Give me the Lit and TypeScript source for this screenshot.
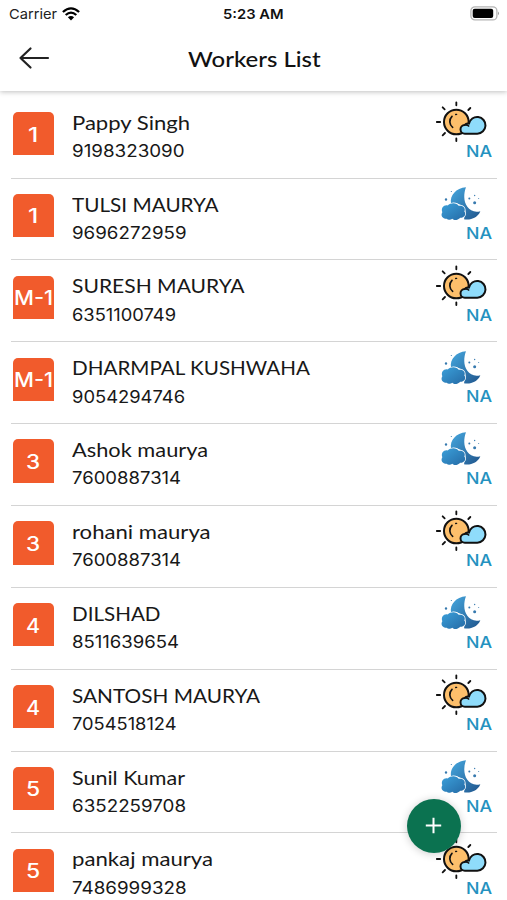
import { LitElement, html, css, svg } from "lit";
import { customElement, property } from "lit/decorators.js";

interface Worker {
  badge: string;
  name: string;
  phone: string;
  nameWidth: number;
  phoneWidth: number;
  shift: "day" | "night";
}

const WORKERS: Worker[] = [
  { badge: "1", name: "Pappy Singh", phone: "9198323090", nameWidth: 117, phoneWidth: 111.5, shift: "day" },
  { badge: "1", name: "TULSI MAURYA", phone: "9696272959", nameWidth: 145.5, phoneWidth: 113.5, shift: "night" },
  { badge: "M-1", name: "SURESH MAURYA", phone: "6351100749", nameWidth: 171.5, phoneWidth: 103, shift: "day" },
  { badge: "M-1", name: "DHARMPAL KUSHWAHA", phone: "9054294746", nameWidth: 237, phoneWidth: 112, shift: "night" },
  { badge: "3", name: "Ashok maurya", phone: "7600887314", nameWidth: 135, phoneWidth: 108, shift: "night" },
  { badge: "3", name: "rohani maurya", phone: "7600887314", nameWidth: 137.5, phoneWidth: 108, shift: "day" },
  { badge: "4", name: "DILSHAD", phone: "8511639654", nameWidth: 87.5, phoneWidth: 106, shift: "night" },
  { badge: "4", name: "SANTOSH MAURYA", phone: "7054518124", nameWidth: 187, phoneWidth: 103.5, shift: "day" },
  { badge: "5", name: "Sunil Kumar", phone: "6352259708", nameWidth: 112, phoneWidth: 113, shift: "night" },
  { badge: "5", name: "pankaj maurya", phone: "7486999328", nameWidth: 140, phoneWidth: 113.5, shift: "day" },
];

/** A single line of text stretched or condensed to a given width. */
@customElement("fit-text")
class FitText extends LitElement {
  @property({ type: Number }) width = 0;
  @property() text = "";

  static styles = css`
    :host { display: block; white-space: nowrap; }
    .line { display: inline-block; transform-origin: 0 50%; }
  `;

  updated() {
    const line = this.renderRoot.querySelector(".line") as HTMLElement;
    line.style.transform = "none";
    const natural = line.getBoundingClientRect().width - 1;
    this.style.width = `${this.width}px`;
    if (natural > 0) line.style.transform = `scaleX(${this.width / natural})`;
  }

  render() {
    return html`<span class="line">${this.text}</span>`;
  }
}

const sun = svg`
  <g fill="none" stroke="#111" stroke-width="5.500" stroke-linecap="round">
    <path d="M109 37v9M109 145v8M50.500 96h10M68 52l6 6M151 54l-6 6M68 136l7-7"/>
    <circle cx="109" cy="96" r="37" fill="#fdbf6b" stroke-width="6"/>
    <path d="M98 112a22 22 0 0 1-2-33" stroke-width="5"/>
    <path d="M107 73.500l3-.5" stroke-width="4"/>
    <path d="M135 131a13 13 0 0 1-1-26a12 12 0 0 1 13-4a25 25 0 1 1 25 30z" fill="#8fdcfb" stroke-width="6" stroke-linejoin="round"/>
    <path d="M134 105a13 13 0 0 1 12 3" stroke-width="5"/>
  </g>`;

const moon = svg`
  <defs>
    <linearGradient id="night" x1="0" y1="0" x2="1" y2="1">
      <stop offset="0" stop-color="#46a8df"/>
      <stop offset="1" stop-color="#20558c"/>
    </linearGradient>
    <linearGradient id="cloud" x1="0" y1="0" x2="1" y2="1">
      <stop offset="0" stop-color="#3ba0da"/>
      <stop offset="1" stop-color="#256aa5"/>
    </linearGradient>
  </defs>
  <path d="M138 36C108 38 89 61 93 84L112 85Q134 91 137 109L132 132C151 136 174 127 181 108C165 113 150 107 142 95C130 77 131 54 138 36Z" fill="url(#night)"/>
  <path d="M80 131C67 131 61 120 67 111C62 99 72 88 83 91C92 81 111 82 116 92C128 89 138 98 133 109C140 117 133 128 121 128C111 137 102 136 97 131C91 136 84 134 80 131Z" fill="url(#cloud)" stroke="#fff" stroke-width="4" paint-order="stroke"/>
  <g fill="#3679ae">
    <circle cx="164" cy="83" r="4.500"/>
    <circle cx="148" cy="70" r="3"/>
    <circle cx="164" cy="61" r="2"/>
    <circle cx="176" cy="70" r="1.500"/>
    <circle cx="78" cy="73" r="3.500"/>
    <circle cx="94" cy="49" r="1.800"/>
  </g>`;

@customElement("app-root")
class AppRoot extends LitElement {
  static styles = css`
    :host {
      display: block;
      position: relative;
      width: 507px;
      height: 900px;
      overflow: hidden;
      background: #fff;
      color: #181818;
      font-family: Lato, "Open Sans", sans-serif;
    }
    svg { display: block; overflow: visible; }
    .header {
      height: 91px;
      box-sizing: border-box;
      background: #fff;
      box-shadow: 0 1px 5px rgba(0, 0, 0, 0.25);
    }
    .status {
      display: grid;
      grid-template-columns: 1fr auto 1fr;
      align-items: center;
      height: 27px;
      padding: 0 7px 0 9px;
      font-family: Inter, sans-serif;
      font-size: 13.5px;
      color: #222;
    }
    .carrier { display: flex; align-items: center; gap: 6px; }
    .clock { font-weight: 600; color: #111; margin: 0 2px 0 -2px; }
    .battery { justify-self: end; }
    .bar {
      display: grid;
      grid-template-columns: 60px 1fr 60px;
      align-items: center;
      height: 64px;
    }
    .back { margin: -2px 0 0 19px; }
    .title {
      justify-self: center;
      font-family: "Lato Medium", "Lato Semibold", Lato, sans-serif;
      font-size: 21px;
      font-weight: 600;
      line-height: 28px;
      color: #111;
    }
    .list { padding: 5.800px 10px 0 11px; }
    .row {
      display: flex;
      box-sizing: border-box;
      height: 81.850px;
      border-bottom: 1.400px solid #d4d4d4;
    }
    .badge {
      display: flex;
      align-items: center;
      justify-content: center;
      box-sizing: border-box;
      width: 40.700px;
      height: 43.300px;
      margin: 15.200px 18px 0 2px;
      padding: 2px 1.500px 0 0;
      border-radius: 5px 5px 0 0;
      background: #f15b2c;
      color: #fff;
      font-family: Inter, sans-serif;
      font-size: 19.500px;
      font-weight: 500;
      white-space: nowrap;
    }
    .person { flex: 1; padding-top: 12px; }
    .name { font-size: 20px; line-height: 26px; }
    .phone { font-family: Inter, sans-serif; font-size: 17px; line-height: 24px; margin-top: 4.300px; }
    .shift { width: 61px; padding-top: 3.200px; }
    .icon { width: 50.670px; height: 43.330px; }
    .na {
      margin: -2.400px 0 0 30px;
      font-family: Inter, sans-serif;
      font-size: 16.500px;
      line-height: 20px;
      color: #2492c0;
      font-weight: 500;
    }
    .fab {
      position: absolute;
      left: 406.500px;
      top: 798.500px;
      width: 54px;
      height: 54px;
      display: grid;
      place-items: center;
      border-radius: 50%;
      background: #0b7250;
      box-shadow: 0 1px 8px rgba(0, 0, 0, 0.2);
    }
  `;

  render() {
    return html`
      <div class="header">
        <div class="status">
          <div class="carrier">
            <fit-text width="47" text="Carrier"></fit-text>
            <svg width="18" height="14" viewBox="0 0 18 14" fill="none" stroke="#000" stroke-width="2.300">
              <path d="M.9 5Q9-2.300 17.100 5"/>
              <path d="M3.700 8Q9 3.300 14.300 8"/>
              <path d="M5.900 10.200Q9 7.600 12.100 10.200L9 13.600Z" fill="#000" stroke="none"/>
            </svg>
          </div>
          <fit-text class="clock" width="59.500" text="5:23 AM"></fit-text>
          <svg class="battery" width="30" height="15" viewBox="0 0 30 15">
            <rect x=".9" y=".9" width="26" height="13" rx="4" fill="#fff" stroke="#b4b4b4" stroke-width="1.300"/>
            <rect x="2.700" y="2.700" width="20.500" height="9.400" rx="2" fill="#000"/>
            <path d="M28 5.500q2 1.900 0 3.800z" fill="#999"/>
          </svg>
        </div>
        <div class="bar">
          <svg class="back" width="31" height="22" viewBox="0 0 31 22" fill="none" stroke="#222" stroke-width="2.200" stroke-linecap="round" stroke-linejoin="round">
            <path d="M11.500 1.500L1.500 11L11.500 20.500M1.500 11H29"/>
          </svg>
          <fit-text class="title" width="131.500" text="Workers List"></fit-text>
        </div>
      </div>
      <div class="list">
        ${WORKERS.map(
          (w) => html`
            <div class="row">
              <div class="badge">
                <fit-text width=${w.badge === "M-1" ? 38 : w.badge === "1" ? 9 : 13} text=${w.badge}></fit-text>
              </div>
              <div class="person">
                <fit-text class="name" width=${w.nameWidth} text=${w.name}></fit-text>
                <fit-text class="phone" width=${w.phoneWidth} text=${w.phone}></fit-text>
              </div>
              <div class="shift">
                <svg class="icon" viewBox=${w.shift === "day" ? "48 30 152 130" : "48 20.500 152 130"}>
                  ${w.shift === "day" ? sun : moon}
                </svg>
                <fit-text class="na" width="25" text="NA"></fit-text>
              </div>
            </div>
          `
        )}
      </div>
      <div class="fab">
        <svg width="17" height="17" viewBox="0 0 17 17" stroke="#fff" stroke-width="2" fill="none">
          <path d="M8.500 .8V16.200M.8 8.500H16.200"/>
        </svg>
      </div>
    `;
  }
}
